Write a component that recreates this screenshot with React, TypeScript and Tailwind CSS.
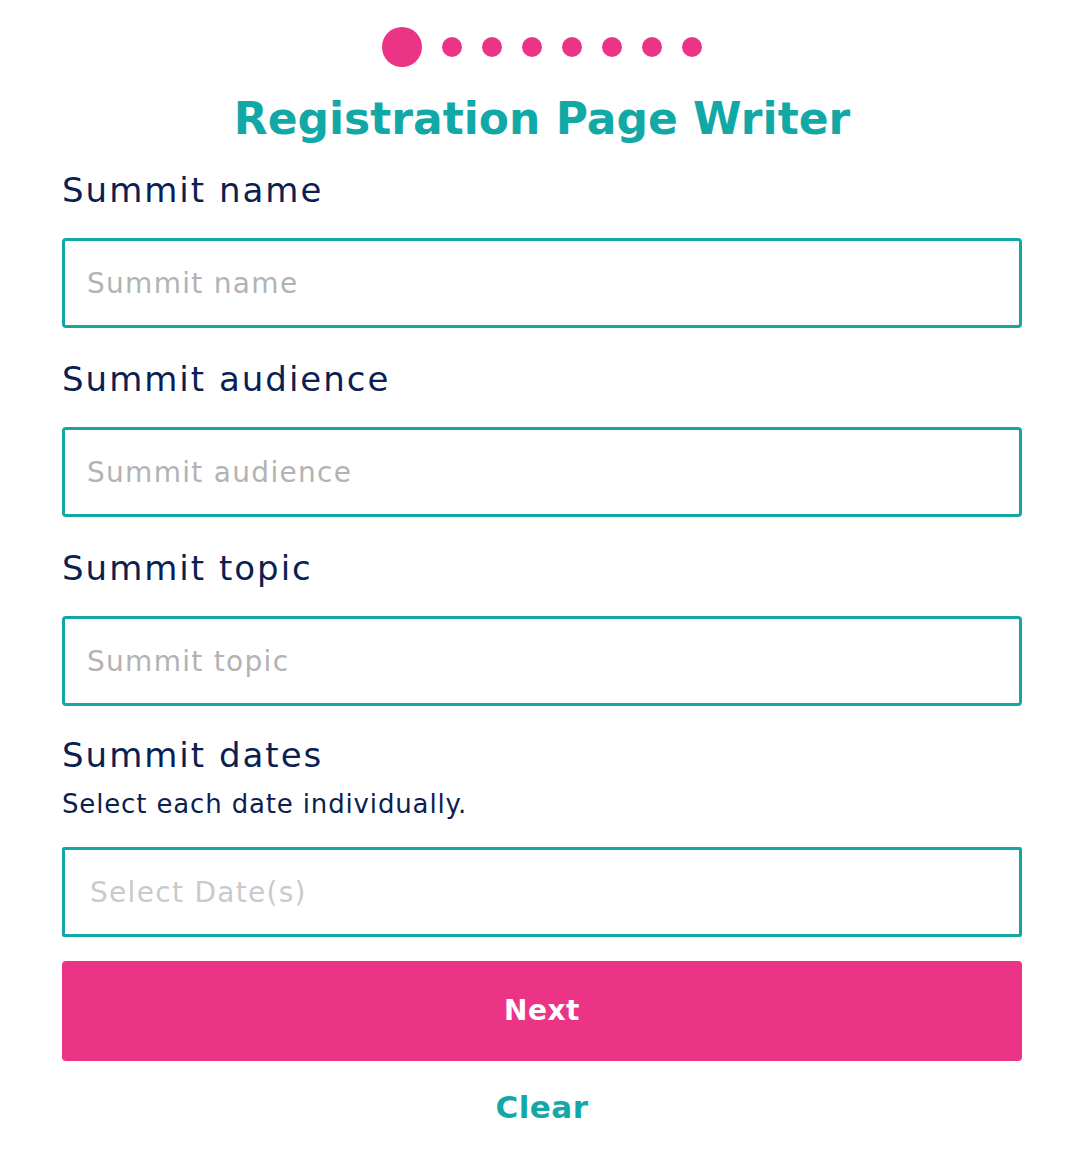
import React from 'react';

const font = { fontFamily: '"DejaVu Sans", "Noto Sans", sans-serif' };

const fields = [
    { label: 'Summit name', placeholder: 'Summit name' },
    { label: 'Summit audience', placeholder: 'Summit audience' },
    { label: 'Summit topic', placeholder: 'Summit topic' },
];

function Field({ label, placeholder }: { label: string; placeholder: string }) {
    return (
        <div className="flex flex-col">
            <label className="text-[34px] leading-[40px] tracking-[2px] text-[#0b1f53] mb-[28px]">{label}</label>
            <input
                className="h-[90px] w-full border-[3px] border-[#13a6a5] rounded-[4px] px-[22px] text-[28px] tracking-[1.3px] text-[#0b1f53] placeholder:text-[#b3b3b3] outline-none"
                placeholder={placeholder}
                style={font}
            />
        </div>
    );
}

export default function App() {
    return (
        <div className="min-h-[1162px] bg-white" style={font}>
            <div className="w-[960px] ml-[62px] pt-[27px] flex flex-col">
                <div className="flex items-center justify-center gap-5">
                    <span className="w-10 h-10 rounded-full bg-[#ec3486]" />
                    {[0, 1, 2, 3, 4, 5, 6].map((i) => (
                        <span key={i} className="w-5 h-5 rounded-full bg-[#ec3486]" />
                    ))}
                </div>
                <h1 className="text-center text-[44px] leading-[52px] font-bold text-[#12a8a6] mt-[26px]">
                    Registration Page Writer
                </h1>
                <div className="flex flex-col gap-[31px] mt-[25px]">
                    {fields.map((f) => (
                        <Field key={f.label} label={f.label} placeholder={f.placeholder} />
                    ))}
                </div>
                <div className="flex flex-col mt-[29px]">
                    <label className="text-[34px] leading-[40px] tracking-[2px] text-[#0b1f53]">Summit dates</label>
                    <p className="text-[26px] leading-[34px] tracking-[0.85px] text-[#0b1f53] mt-[12px] mb-[26px]">
                        Select each date individually.
                    </p>
                    <input
                        className="h-[90px] w-full border-[3px] border-[#13a6a5] rounded-[2px] px-[25px] text-[28px] tracking-[1.3px] text-[#0b1f53] placeholder:text-[#cacaca] outline-none"
                        placeholder="Select Date(s)"
                        style={font}
                    />
                </div>
                <button
                    type="button"
                    className="mt-[24px] h-[100px] w-full rounded-[4px] bg-[#ec3486] text-white text-[28px] tracking-[0.5px] font-bold"
                >
                    Next
                </button>
                <button
                    type="button"
                    className="mt-[26px] text-center text-[31px] leading-[40px] font-bold tracking-[0.5px] text-[#12a8a6]"
                >
                    Clear
                </button>
            </div>
        </div>
    );
}
